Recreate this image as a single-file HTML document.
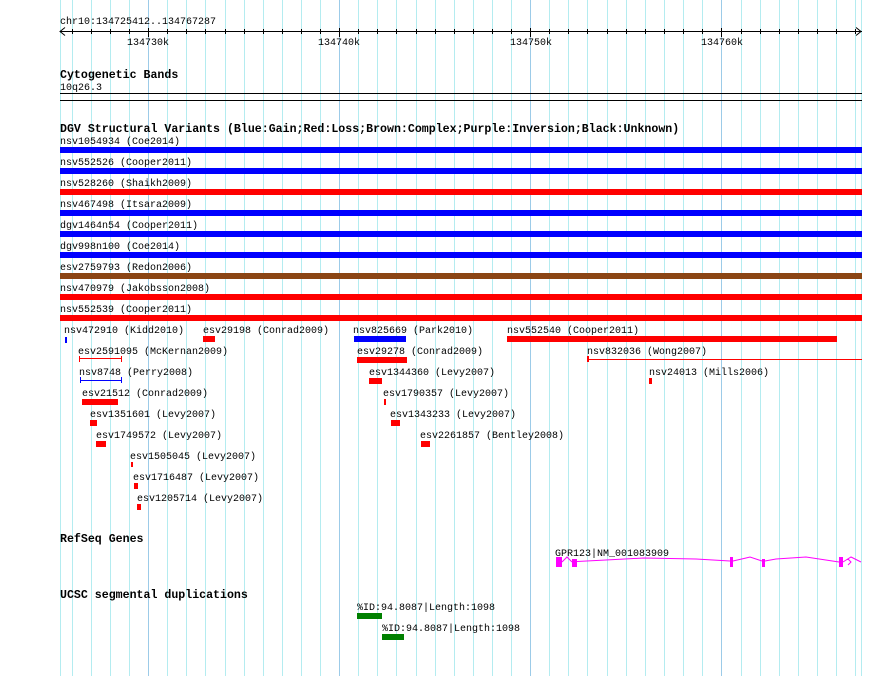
<!DOCTYPE html>
<html><head><meta charset="utf-8"><style>
html,body{margin:0;padding:0;background:#fff;}
svg{display:block;}
text{font-family:"Liberation Mono","DejaVu Sans Mono",monospace;font-size:10px;fill:#000;}
.b{font-weight:bold;font-size:11.6px;}
</style></head><body>
<svg width="890" height="676" xmlns="http://www.w3.org/2000/svg" shape-rendering="crispEdges">
<g stroke="#b4ecf0" stroke-width="1">
<line x1="60.5" y1="0" x2="60.5" y2="676"/>
<line x1="72.5" y1="0" x2="72.5" y2="676"/><line x1="91.5" y1="0" x2="91.5" y2="676"/><line x1="110.5" y1="0" x2="110.5" y2="676"/><line x1="129.5" y1="0" x2="129.5" y2="676"/>
<line x1="167.5" y1="0" x2="167.5" y2="676"/><line x1="186.5" y1="0" x2="186.5" y2="676"/><line x1="205.5" y1="0" x2="205.5" y2="676"/><line x1="225.5" y1="0" x2="225.5" y2="676"/><line x1="244.5" y1="0" x2="244.5" y2="676"/><line x1="263.5" y1="0" x2="263.5" y2="676"/><line x1="282.5" y1="0" x2="282.5" y2="676"/><line x1="301.5" y1="0" x2="301.5" y2="676"/><line x1="320.5" y1="0" x2="320.5" y2="676"/>
<line x1="358.5" y1="0" x2="358.5" y2="676"/><line x1="377.5" y1="0" x2="377.5" y2="676"/><line x1="396.5" y1="0" x2="396.5" y2="676"/><line x1="416.5" y1="0" x2="416.5" y2="676"/><line x1="435.5" y1="0" x2="435.5" y2="676"/><line x1="454.5" y1="0" x2="454.5" y2="676"/><line x1="473.5" y1="0" x2="473.5" y2="676"/><line x1="492.5" y1="0" x2="492.5" y2="676"/><line x1="511.5" y1="0" x2="511.5" y2="676"/>
<line x1="549.5" y1="0" x2="549.5" y2="676"/><line x1="568.5" y1="0" x2="568.5" y2="676"/><line x1="587.5" y1="0" x2="587.5" y2="676"/><line x1="607.5" y1="0" x2="607.5" y2="676"/><line x1="626.5" y1="0" x2="626.5" y2="676"/><line x1="645.5" y1="0" x2="645.5" y2="676"/><line x1="664.5" y1="0" x2="664.5" y2="676"/><line x1="683.5" y1="0" x2="683.5" y2="676"/><line x1="702.5" y1="0" x2="702.5" y2="676"/>
<line x1="741.5" y1="0" x2="741.5" y2="676"/><line x1="760.5" y1="0" x2="760.5" y2="676"/><line x1="779.5" y1="0" x2="779.5" y2="676"/><line x1="798.5" y1="0" x2="798.5" y2="676"/><line x1="817.5" y1="0" x2="817.5" y2="676"/><line x1="836.5" y1="0" x2="836.5" y2="676"/><line x1="855.5" y1="0" x2="855.5" y2="676"/>
<line x1="861.5" y1="0" x2="861.5" y2="676"/>
</g>
<g stroke="#9ccbe8" stroke-width="1">
<line x1="148.5" y1="0" x2="148.5" y2="676"/><line x1="339.5" y1="0" x2="339.5" y2="676"/><line x1="530.5" y1="0" x2="530.5" y2="676"/><line x1="721.5" y1="0" x2="721.5" y2="676"/>
</g>

<text x="60" y="24">chr10:134725412..134767287</text>
<g stroke="#000" stroke-width="1">
<line x1="60" y1="31.5" x2="862" y2="31.5"/>
<path d="M65 27.5L60 31.5L65 35.5M856 27.5L861 31.5L856 35.5" fill="none" shape-rendering="auto"/>
<path d="M72.5 29v5M91.5 29v5M110.5 29v5M129.5 29v5M167.5 29v5M186.5 29v5M205.5 29v5M225.5 29v5M244.5 29v5M263.5 29v5M282.5 29v5M301.5 29v5M320.5 29v5M358.5 29v5M377.5 29v5M396.5 29v5M416.5 29v5M435.5 29v5M454.5 29v5M473.5 29v5M492.5 29v5M511.5 29v5M549.5 29v5M568.5 29v5M587.5 29v5M607.5 29v5M626.5 29v5M645.5 29v5M664.5 29v5M683.5 29v5M702.5 29v5M741.5 29v5M760.5 29v5M779.5 29v5M798.5 29v5M817.5 29v5M836.5 29v5M855.5 29v5"/>
<path d="M148.5 28v9M339.5 28v9M530.5 28v9M721.5 28v9"/>
</g>
<text x="148" y="45" text-anchor="middle">134730k</text>
<text x="339" y="45" text-anchor="middle">134740k</text>
<text x="531" y="45" text-anchor="middle">134750k</text>
<text x="722" y="45" text-anchor="middle">134760k</text>

<text class="b" x="60" y="78">Cytogenetic Bands</text>
<text x="60" y="90">10q26.3</text>
<rect x="60" y="93" width="802" height="1" fill="#000"/>
<rect x="60" y="100" width="802" height="1" fill="#000"/>

<text class="b" x="60" y="132">DGV Structural Variants (Blue:Gain;Red:Loss;Brown:Complex;Purple:Inversion;Black:Unknown)</text>
<text x="60" y="144">nsv1054934 (Coe2014)</text><rect x="60" y="147" width="802" height="6" fill="#0000ff"/>
<text x="60" y="165">nsv552526 (Cooper2011)</text><rect x="60" y="168" width="802" height="6" fill="#0000ff"/>
<text x="60" y="186">nsv528260 (Shaikh2009)</text><rect x="60" y="189" width="802" height="6" fill="#ff0000"/>
<text x="60" y="207">nsv467498 (Itsara2009)</text><rect x="60" y="210" width="802" height="6" fill="#0000ff"/>
<text x="60" y="228">dgv1464n54 (Cooper2011)</text><rect x="60" y="231" width="802" height="6" fill="#0000ff"/>
<text x="60" y="249">dgv998n100 (Coe2014)</text><rect x="60" y="252" width="802" height="6" fill="#0000ff"/>
<text x="60" y="270">esv2759793 (Redon2006)</text><rect x="60" y="273" width="802" height="6" fill="#8b4513"/>
<text x="60" y="291">nsv470979 (Jakobsson2008)</text><rect x="60" y="294" width="802" height="6" fill="#ff0000"/>
<text x="60" y="312">nsv552539 (Cooper2011)</text><rect x="60" y="315" width="802" height="6" fill="#ff0000"/>

<text x="64" y="333">nsv472910 (Kidd2010)</text><rect x="65" y="337" width="2" height="6" fill="#0000ff"/>
<text x="203" y="333">esv29198 (Conrad2009)</text><rect x="203" y="336" width="12" height="6" fill="#ff0000"/>
<text x="353" y="333">nsv825669 (Park2010)</text><rect x="354" y="336" width="52" height="6" fill="#0000ff"/>
<text x="507" y="333">nsv552540 (Cooper2011)</text><rect x="507" y="336" width="330" height="6" fill="#ff0000"/>

<text x="78" y="354">esv2591095 (McKernan2009)</text>
<path d="M79 358.5H122M79.5 356v6M121.5 356v6" stroke="#ff0000"/>
<text x="357" y="354">esv29278 (Conrad2009)</text><rect x="357" y="357" width="50" height="6" fill="#ff0000"/>
<text x="587" y="354">nsv832036 (Wong2007)</text>
<path d="M587 359.5H862" stroke="#ff0000"/><rect x="587" y="356" width="2" height="6" fill="#ff0000"/>

<text x="79" y="375">nsv8748 (Perry2008)</text>
<path d="M80 380.5H122M80.5 377v6M121.5 377v6" stroke="#0000ff"/>
<text x="369" y="375">esv1344360 (Levy2007)</text><rect x="369" y="378" width="13" height="6" fill="#ff0000"/>
<text x="649" y="375">nsv24013 (Mills2006)</text><rect x="649" y="378" width="3" height="6" fill="#ff0000"/>

<text x="82" y="396">esv21512 (Conrad2009)</text><rect x="82" y="399" width="36" height="6" fill="#ff0000"/>
<text x="383" y="396">esv1790357 (Levy2007)</text><rect x="384" y="399" width="2" height="6" fill="#ff0000"/>

<text x="90" y="417">esv1351601 (Levy2007)</text><rect x="90" y="420" width="7" height="6" fill="#ff0000"/>
<text x="390" y="417">esv1343233 (Levy2007)</text><rect x="391" y="420" width="9" height="6" fill="#ff0000"/>

<text x="96" y="438">esv1749572 (Levy2007)</text><rect x="96" y="441" width="10" height="6" fill="#ff0000"/>
<text x="420" y="438">esv2261857 (Bentley2008)</text><rect x="421" y="441" width="9" height="6" fill="#ff0000"/>

<text x="130" y="459">esv1505045 (Levy2007)</text><rect x="131" y="462" width="2" height="5" fill="#ff0000"/>
<text x="133" y="480">esv1716487 (Levy2007)</text><rect x="134" y="483" width="4" height="6" fill="#ff0000"/>
<text x="137" y="501">esv1205714 (Levy2007)</text><rect x="137" y="504" width="4" height="6" fill="#ff0000"/>

<text class="b" x="60" y="542">RefSeq Genes</text>
<text x="555" y="556">GPR123|NM_001083909</text>
<g fill="#ff00ff">
<rect x="556" y="557" width="6" height="10"/>
<rect x="572" y="559" width="5" height="8"/>
<rect x="730" y="557" width="3" height="10"/>
<rect x="762" y="559" width="3" height="8"/>
<rect x="839" y="557" width="4" height="10"/>
</g>
<path d="M562 562L567 557L572 562M577 561.5L606 560L644 558L696 559L730 561M733 561L746 558L750 557L762 561M765 561L776 559L806 557L839 562M843 562L851 557L861 562M848 559L851 562L848 565" fill="none" stroke="#ff00ff" stroke-width="1" shape-rendering="auto"/>

<text class="b" x="60" y="598">UCSC segmental duplications</text>
<text x="357" y="610">%ID:94.8087|Length:1098</text><rect x="357" y="613" width="25" height="6" fill="#008000"/>
<text x="382" y="631">%ID:94.8087|Length:1098</text><rect x="382" y="634" width="22" height="6" fill="#008000"/>
</svg>
</body></html>
